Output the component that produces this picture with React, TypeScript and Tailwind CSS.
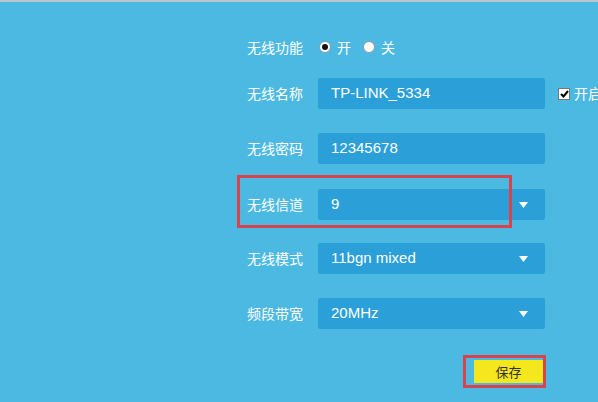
import React from "react";

const cjk = { fontFamily: '"Noto Sans CJK SC", "Liberation Sans", sans-serif' };
const latin = { fontFamily: '"Liberation Sans", "Noto Sans CJK SC", sans-serif' };

const Arrow = () => (
  <svg width="9" height="6" viewBox="0 0 9 6" className="absolute right-[17px] top-[13px]">
    <path d="M0 0 H9 L4.5 6 Z" fill="#ffffff" />
  </svg>
);

const Field = ({
  label,
  value,
  select,
  className,
  children,
}: {
  label: string;
  value: string;
  select?: boolean;
  className?: string;
  children?: React.ReactNode;
}) => (
  <div className={`flex h-[31px] items-center ${className ?? ""}`}>
    <span className="w-[71px] shrink-0 text-[14px] text-white" style={cjk}>
      {label}
    </span>
    <div className="relative flex h-[31px] w-[227px] shrink-0 items-center rounded-[2px] bg-[#2ba0d8] pl-[13px] text-[15px] text-white" style={latin}>
      {value}
      {select && <Arrow />}
    </div>
    {children}
  </div>
);

const Radio = ({ checked, label }: { checked?: boolean; label: string }) => (
  <div className="flex items-center">
    <span className="flex h-[12px] w-[12px] items-center justify-center rounded-full border border-[#8a9aa4] bg-white">
      {checked && <span className="h-[6px] w-[6px] rounded-full bg-[#111]" />}
    </span>
    <span className="ml-[6px] text-[14px] text-white" style={cjk}>
      {label}
    </span>
  </div>
);

export default function App() {
  return (
    <div className="relative h-[402px] w-[598px] overflow-hidden bg-[#4cb9e3]">
      <div className="h-[2px] w-full bg-[#b9c6cc]" />
      <div className="flex flex-col pl-[247px]">
        <div className="mt-[35px] flex h-[20px] items-center">
          <span className="w-[71px] text-[14px] text-white" style={cjk}>
            无线功能
          </span>
          <div className="flex items-center gap-[12px] pl-[1px]">
            <Radio checked label="开" />
            <Radio label="关" />
          </div>
        </div>

        <Field label="无线名称" value="TP-LINK_5334" className="mt-[21px]">
          <div className="ml-[13px] flex shrink-0 items-center whitespace-nowrap">
            <span className="flex h-[12px] w-[12px] items-center justify-center border border-[#777] bg-white">
              <svg width="9" height="8" viewBox="0 0 9 8">
                <path d="M1 4 L3.5 6.5 L8 1" fill="none" stroke="#000" strokeWidth="2" />
              </svg>
            </span>
            <span className="ml-[4px] text-[14px] text-white" style={cjk}>
              开启
            </span>
          </div>
        </Field>

        <Field label="无线密码" value="12345678" className="mt-[24px]" />
        <Field label="无线信道" value="9" select className="mt-[25px]" />
        <Field label="无线模式" value="11bgn mixed" select className="mt-[23px]" />
        <Field label="频段带宽" value="20MHz" select className="mt-[24px]" />

        <div className="mt-[31px] flex pl-[227px]">
          <button className="flex h-[23px] w-[69px] items-center justify-center bg-[#f5e71e] text-[13px] text-[#333]" style={cjk}>
            保存
          </button>
        </div>
      </div>

      {/* red annotation boxes */}
      <div className="pointer-events-none absolute left-[237px] top-[175px] h-[53px] w-[275px] border-[3px] border-[#d9434b]" />
      <div className="pointer-events-none absolute left-[463px] top-[355px] h-[33px] w-[83px] border-[3px] border-[#d9434b]" />
    </div>
  );
}
